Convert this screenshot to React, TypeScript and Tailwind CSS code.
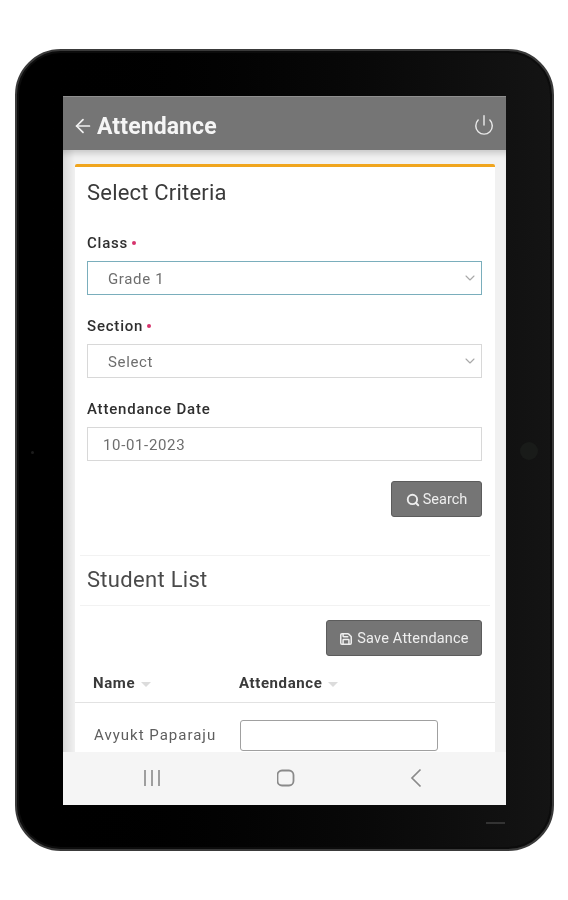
import { ArrowLeft, ChevronDown, Power, Save, Search } from "lucide-react";

function Label({ text, required }: { text: string; required?: boolean }) {
  return (
    <div className="flex h-[20px] translate-y-[1px] items-center text-[15px] font-medium tracking-[0.8px] text-[#2f2f2f]">
      {text}
      {required ? <span className="mb-[1px] ml-[4px] h-[4px] w-[4px] rounded-full bg-[#d6336c]" /> : null}
    </div>
  );
}

function SelectBox({ value, focused }: { value: string; focused?: boolean }) {
  return (
    <div
      className={`mt-[9px] flex h-[34px] items-center justify-between border pl-[20px] pr-[3px] text-[15px] tracking-[0.65px] text-[#6e6e6e] ${
        focused ? "border-[1.5px] border-[#7aaebc]" : "border-[#d8d8d8]"
      }`}
    >
      <span className="translate-y-[1px]">{value}</span>
      <ChevronDown size={16} strokeWidth={1.6} className="text-[#a8a8a8]" />
    </div>
  );
}

function GreyButton({ children, className }: { children: React.ReactNode; className: string }) {
  return (
    <button className={`flex items-center justify-center rounded-[3px] border border-[#5c5c5c] bg-[#757575] pt-[1px] text-[14.5px] text-[#eeeeee] ${className}`}>
      {children}
    </button>
  );
}

function Caret() {
  return <span className="ml-[6px] mt-[2px] h-0 w-0 border-x-[5px] border-t-[5px] border-x-transparent border-t-[#dcdcdc]" />;
}

export default function App() {
  return (
    <div className="h-[900px] w-[568px] overflow-hidden bg-white pl-[15px] pt-[49px] font-['Roboto',sans-serif]">
      <div className="relative h-[802px] w-[539px] rounded-[46px] border-[2px] border-[#3a3a3a] bg-gradient-to-r from-black via-[#050505] to-[#141414] pl-[46px] pt-[45px] blur-[0.4px] shadow-[inset_0_0_0_2px_#0c0c0c]">
        <span className="absolute left-[14px] top-[400px] h-[3px] w-[3px] rounded-full bg-[#1c1c1c]" />
        <span className="absolute right-[14px] top-[391px] h-[18px] w-[18px] rounded-full bg-[#191b19]" />
        <span className="absolute bottom-[25px] right-[47px] h-[2px] w-[19px] bg-[#333]" />

        <div className="flex h-[709px] w-[443px] flex-col overflow-hidden bg-[#efefef]">
          <header className="flex h-[54px] shrink-0 items-center justify-between border-t border-[#8f8f8f] bg-[#757575] pl-[9px] pr-[11px] pt-[8px] text-white">
            <div className="flex items-center gap-[3px]">
              <ArrowLeft size={22} strokeWidth={1.9} className="mb-[3px] text-[#f1f1f1]" />
              <span className="text-[23px] font-bold tracking-[0.1px] text-[#f5f5f5]">Attendance</span>
            </div>
            <Power size={22} strokeWidth={1.6} className="mb-[6px] text-[#e8e8e8]" />
          </header>

          <main className="min-h-0 flex-1 overflow-hidden bg-gradient-to-r from-[#d9d9d9] to-[#f1f1f1] to-[12px] pl-[12px] pr-[11px] pt-[14px] shadow-[inset_0_7px_6px_-4px_rgba(0,0,0,0.18)]">
            <div className="h-[600px] rounded-t-[2px] border-t-[3px] border-[#f0a51e] bg-white">
              <h2 className="pl-[12px] pt-[13px] text-[22px] leading-[26px] tracking-[0.2px] text-[#3a3a3a]">Select Criteria</h2>

              <div className="pl-[12px] pr-[13px] pt-[26px]">
                <Label text="Class" required />
                <SelectBox value="Grade 1" focused />
                <div className="mt-[20px]">
                  <Label text="Section" required />
                  <SelectBox value="Select" />
                </div>
                <div className="mt-[20px]">
                  <Label text="Attendance Date" />
                  <div className="mt-[9px] flex h-[34px] items-center border border-[#d8d8d8] pl-[15px] text-[15px] tracking-[0.65px] text-[#6e6e6e]">
                    <span className="translate-y-[1px]">10-01-2023</span>
                  </div>
                </div>
                <div className="mt-[20px] flex justify-end">
                  <GreyButton className="h-[36px] w-[91px] gap-[3px]">
                    <Search size={14} strokeWidth={3.2} />
                    Search
                  </GreyButton>
                </div>
              </div>

              <div className="mx-[5px] mt-[38px] border-t border-[#f2f2f2]" />
              <h2 className="pl-[12px] pt-[11px] text-[22px] leading-[26px] tracking-[0.3px] text-[#4a4a4a]">Student List</h2>
              <div className="mx-[5px] mt-[12px] border-t border-[#f2f2f2]" />

              <div className="flex justify-end pr-[13px] pt-[14px]">
                <GreyButton className="h-[36px] w-[156px] gap-[4px] tracking-[0.2px]">
                  <Save size={14} strokeWidth={2.6} />
                  Save Attendance
                </GreyButton>
              </div>

              <div className="flex h-[47px] items-center border-b border-[#e2e2e2] pl-[18px] pt-[8px] text-[15px] font-bold tracking-[0.6px] text-[#3a3a3a]">
                <div className="flex w-[146px] items-center">
                  Name
                  <Caret />
                </div>
                <div className="flex items-center">
                  Attendance
                  <Caret />
                </div>
              </div>

              <div className="flex items-start pl-[19px] pt-[17px]">
                <div className="w-[146px] pt-[5px] text-[15px] leading-[20px] tracking-[1px] text-[#5e5e5e]">Avyukt Paparaju</div>
                <div className="h-[31px] w-[198px] rounded-[3px] border border-[#a0a0a0] bg-white" />
              </div>
            </div>
          </main>

          <nav className="flex h-[53px] shrink-0 items-center justify-between bg-[#f5f5f5] pb-[1px] pl-[80px] pr-[84px] text-[#8a8a8a]">
            <svg width="18" height="18" viewBox="0 0 18 18" fill="none" stroke="currentColor" strokeWidth="1.6">
              <path d="M2 1v16M9 1v16M16 1v16" />
            </svg>
            <svg width="18" height="18" viewBox="0 0 18 18" fill="none" stroke="currentColor" strokeWidth="1.8">
              <rect x="0.5" y="1.5" width="16" height="15" rx="4.5" />
            </svg>
            <svg width="12" height="20" viewBox="0 0 12 20" fill="none" stroke="currentColor" strokeWidth="1.7">
              <path d="M10.5 1.5 2 10l8.5 8.5" />
            </svg>
          </nav>
        </div>
      </div>
    </div>
  );
}
